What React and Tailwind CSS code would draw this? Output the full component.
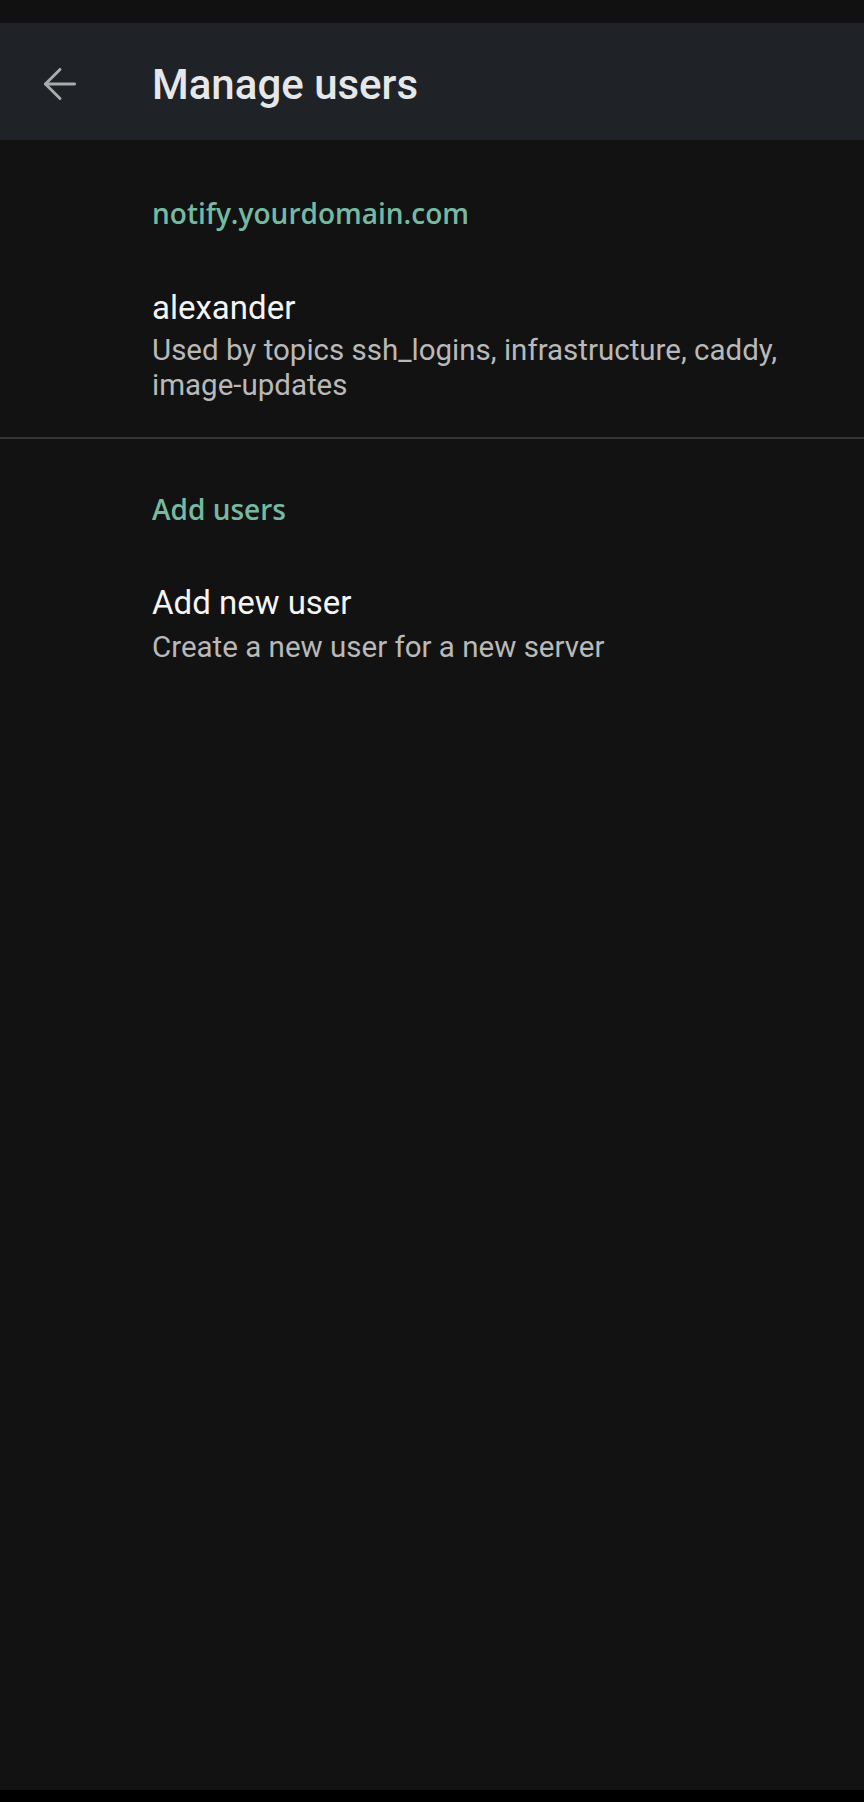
import { ArrowLeft } from 'lucide-react'

const roboto = { fontFamily: 'Roboto, "Liberation Sans", sans-serif' }

function SectionHeader({ children, className = '' }) {
  return (
    <div
      className={`text-[28px] leading-[36px] font-semibold text-[#76b9a3] ${className}`}
      style={{ fontFamily: '"Open Sans", "Noto Sans", sans-serif' }}
    >
      {children}
    </div>
  )
}

function Item({ title, summary, className = '', gap = 'mt-[5px]' }) {
  return (
    <div className={`pr-8 ${className}`}>
      <div className="text-[33px] leading-[40px] text-[#f5f5f5]">{title}</div>
      <div className={`${gap} text-[29.5px] leading-[34.5px] text-[#b9b9b9]`}>{summary}</div>
    </div>
  )
}

export default function App() {
  return (
    <div className="flex h-[1802px] w-[864px] flex-col bg-[#121212]" style={roboto}>
      {/* status bar */}
      <div className="h-[23px] bg-[#111111]" />

      {/* app bar */}
      <div className="flex h-[117px] items-center bg-[#1f2226]">
        <div className="flex w-[152px] justify-start pl-[35px] pt-[4px]">
          <ArrowLeft className="h-[50px] w-[50px] text-[#a9abad]" strokeWidth={1.4} />
        </div>
        <h1 className="mt-[5px] text-[42px] font-medium text-[#e6e7e8]">Manage users</h1>
      </div>

      {/* content */}
      <div className="flex-1">
        <div className="pl-[152px]">
          <SectionHeader className="mt-[55px]">notify.yourdomain.com</SectionHeader>
          <Item
            className="mt-[57px]"
            title="alexander"
            summary="Used by topics ssh_logins, infrastructure, caddy, image-updates"
          />
        </div>

        <div className="mt-[35px] h-[2px] bg-[#353535]" />

        <div className="pl-[152px]">
          <SectionHeader className="mt-[52px]">Add users</SectionHeader>
          <Item
            className="mt-[56px]"
            gap="mt-[7px]"
            title="Add new user"
            summary="Create a new user for a new server"
          />
        </div>
      </div>

      {/* nav bar */}
      <div className="h-[12px] bg-black" />
    </div>
  )
}
